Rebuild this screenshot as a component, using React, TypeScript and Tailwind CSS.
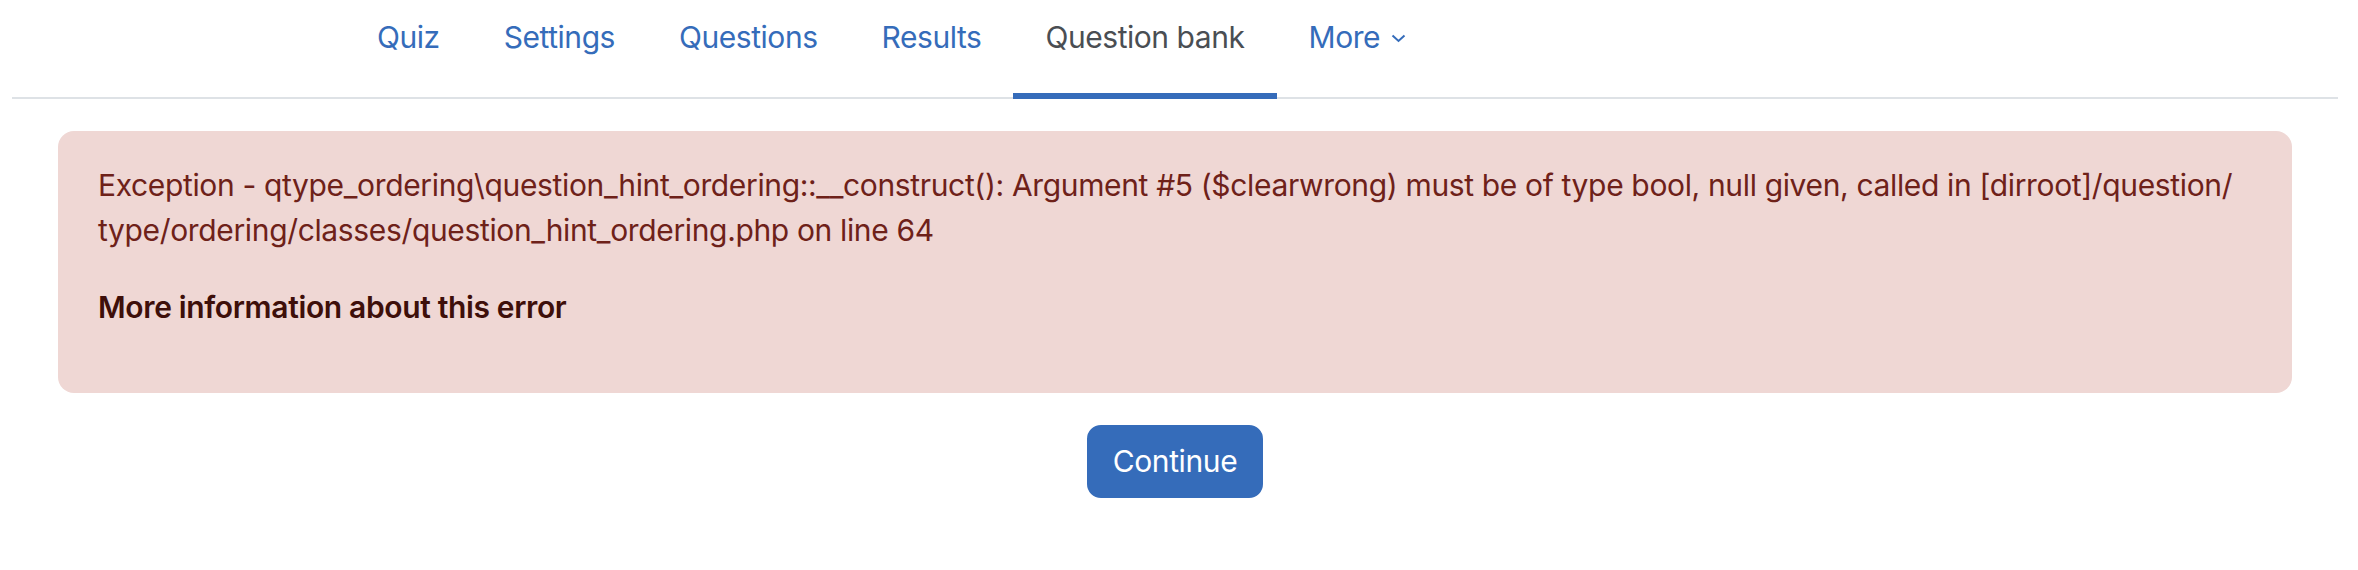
import React from 'react'

const tabs = ['Quiz', 'Settings', 'Questions', 'Results', 'Question bank']

function SecondaryNav() {
  return (
    <nav className="flex h-[99px] border-b-2 border-[#dee2e6] pl-[333px] tracking-[-0.45px]">
      {tabs.map((t) => {
        const active = t === 'Question bank'
        return (
          <a
            key={t}
            className={`-mb-[2px] h-[99px] px-[32px] pt-[15px] leading-[45px] whitespace-nowrap border-b-[6px] ${
              active ? 'border-[#356cba] text-[#4a4e53]' : 'border-transparent text-[#356cba]'
            }`}
          >
            {t}
          </a>
        )
      })}
      <a className="-mb-[2px] h-[99px] px-[32px] pt-[15px] leading-[45px] whitespace-nowrap border-b-[6px] border-transparent text-[#356cba] flex items-start gap-[11px]">
        <span>More</span>
        <svg width="15" height="9" viewBox="0 0 15 9" className="mt-[19px]">
          <polyline points="1.5,1.5 7.5,7 13.5,1.5" fill="none" stroke="#356cba" strokeWidth="2" />
        </svg>
      </a>
    </nav>
  )
}

export default function App() {
  return (
    <div
      className="w-[2326px] ml-[12px] bg-white text-[30px]"
      style={{ fontFamily: 'Inter, "Liberation Sans", sans-serif' }}
    >
      <SecondaryNav />
      <div className="px-[46px] pt-[32px] pb-[70px]">
        <div className="rounded-[16px] bg-[#efd7d4] text-[#6e2119] px-[40px] pt-[32px] pb-[31px] leading-[45px] tracking-[-0.35px]">
          <p className="mb-[32px]">
            Exception - qtype_ordering\question_hint_ordering::__construct(): Argument #5 ($clearwrong) must be of type
            bool, null given, called in [dirroot]/question/
            <br />
            type/ordering/classes/question_hint_ordering.php on line 64
          </p>
          <p className="mb-[32px] font-semibold text-[#3e0f0a]">More information about this error</p>
        </div>
        <div className="flex justify-center mt-[32px]">
          <button className="rounded-[14px] border-2 border-[#356cba] bg-[#356cba] px-[24px] py-[12px] leading-[45px] tracking-[-0.4px] text-white">
            Continue
          </button>
        </div>
      </div>
    </div>
  )
}
